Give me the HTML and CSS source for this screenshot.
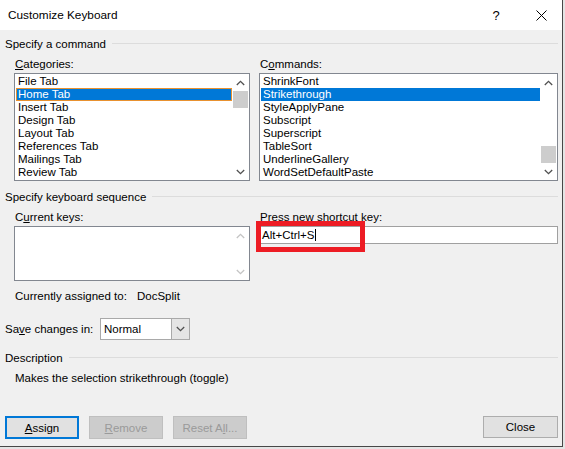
FILE: index.html
```html
<!DOCTYPE html>
<html>
<head>
<meta charset="utf-8">
<title>Customize Keyboard</title>
<link rel="stylesheet" href="styles.css">
</head>
<body>
<div class="dialog">
  <header class="titlebar">
    <span class="title">Customize Keyboard</span>
    <span class="help">?</span>
    <span class="close">
      <svg width="11" height="11" viewBox="0 0 11 11"><path d="M0.5 0.5 L10.5 10.5 M10.5 0.5 L0.5 10.5" stroke="#000" stroke-width="1" fill="none"/></svg>
    </span>
  </header>
  <main class="content">
    <div class="group-head"><span>Specify a command</span></div>
    <div class="cols labels">
      <div class="lbl"><u>C</u>ategories:</div>
      <div class="lbl">C<u>o</u>mmands:</div>
    </div>
    <div class="cols lists">
      <div class="listbox">
        <ul class="items">
          <li>File Tab</li>
          <li class="sel focus">Home Tab</li>
          <li>Insert Tab</li>
          <li>Design Tab</li>
          <li>Layout Tab</li>
          <li>References Tab</li>
          <li>Mailings Tab</li>
          <li>Review Tab</li>
        </ul>
        <div class="vscroll">
          <span class="arrow"><svg width="9" height="6" viewBox="0 0 9 6"><path d="M0.8 5 L4.5 1.3 L8.2 5" class="chev"/></svg></span>
          <span class="track"><span class="thumb"></span></span>
          <span class="arrow"><svg width="9" height="6" viewBox="0 0 9 6"><path d="M0.8 1 L4.5 4.7 L8.2 1" class="chev"/></svg></span>
        </div>
      </div>
      <div class="listbox">
        <ul class="items">
          <li>ShrinkFont</li>
          <li class="sel">Strikethrough</li>
          <li>StyleApplyPane</li>
          <li>Subscript</li>
          <li>Superscript</li>
          <li>TableSort</li>
          <li>UnderlineGallery</li>
          <li>WordSetDefaultPaste</li>
        </ul>
        <div class="vscroll">
          <span class="arrow"><svg width="9" height="6" viewBox="0 0 9 6"><path d="M0.8 5 L4.5 1.3 L8.2 5" class="chev"/></svg></span>
          <span class="track end"><span class="thumb"></span></span>
          <span class="arrow"><svg width="9" height="6" viewBox="0 0 9 6"><path d="M0.8 1 L4.5 4.7 L8.2 1" class="chev"/></svg></span>
        </div>
      </div>
    </div>

    <div class="group-head second"><span>Specify keyboard sequence</span></div>
    <div class="cols labels">
      <div class="lbl">C<u>u</u>rrent keys:</div>
      <div class="lbl">Press new shortcut key:</div>
    </div>
    <div class="cols keys">
      <div class="keysbox">
        <div class="vscroll disabled">
          <span class="arrow"><svg width="9" height="6" viewBox="0 0 9 6"><path d="M0.8 5 L4.5 1.3 L8.2 5" class="chev"/></svg></span>
          <span class="track"></span>
          <span class="arrow"><svg width="9" height="6" viewBox="0 0 9 6"><path d="M0.8 1 L4.5 4.7 L8.2 1" class="chev"/></svg></span>
        </div>
      </div>
      <div class="keyfield">
        <div class="input"><span class="typed">Alt+Ctrl+S</span></div>
        <div class="redmark"></div>
      </div>
    </div>
    <div class="assigned">
      <span class="assigned-lbl">Currently assigned to:</span>
      <span>DocSplit</span>
    </div>
    <div class="saverow">
      <span class="save-lbl">Sa<u>v</u>e changes in:</span>
      <div class="combo">
        <span class="combo-text">Normal</span>
        <span class="combo-btn"><svg width="9" height="6" viewBox="0 0 9 6"><path d="M0.8 1 L4.5 4.7 L8.2 1" class="chev"/></svg></span>
      </div>
    </div>

    <div class="group-head third"><span>Description</span></div>
    <div class="desc">Makes the selection strikethrough (toggle)</div>

    <div class="buttons">
      <button class="btn default"><u>A</u>ssign</button>
      <button class="btn disabled"><u>R</u>emove</button>
      <button class="btn disabled">Reset A<u>l</u>l...</button>
      <button class="btn close-btn">Close</button>
    </div>
  </main>
</div>
</body>
</html>
```

FILE: styles.css
```css
html, body {
  margin: 0;
  padding: 0;
}
body {
  background: #e4e4e4;
  font-family: "Liberation Sans", Arial, sans-serif;
  font-size: 11.5px;
  color: #000;
  width: 565px;
  height: 449px;
  overflow: hidden;
}
.dialog {
  width: 563px;
  height: 447px;
  box-sizing: border-box;
  border-right: 1px solid #474747;
  border-bottom: 1px solid #474747;
  background: #f0f0f0;
  display: flex;
  flex-direction: column;
}
.titlebar {
  height: 30px;
  background: #fff;
  display: flex;
  align-items: center;
  padding-left: 8px;
  flex: none;
}
.title {
  flex: 1;
  font-size: 11.8px;
}
.help {
  width: 42px;
  margin-right: 3px;
  text-align: center;
  font-size: 13px;
}
.close {
  width: 42px;
  display: flex;
  justify-content: center;
  align-items: center;
}
.content {
  padding: 0 4px 0 5px;
  display: flex;
  flex-direction: column;
}
.group-head {
  height: 16px;
  line-height: 16px;
  display: flex;
  align-items: center;
  margin-top: 6px;
  white-space: nowrap;
}
.group-head::after {
  content: "";
  flex: 1;
  border-top: 1px solid #dcdcdc;
  margin-left: 6px;
  margin-top: -1px;
}
.group-head.second { margin-top: 8px; }
.group-head.third { margin-top: 10px; }
.cols {
  display: grid;
  grid-template-columns: 236px 299px;
  column-gap: 9px;
  padding-left: 9px;
}
.labels {
  margin-top: 4px;
  height: 16px;
  line-height: 16px;
}
.lbl { padding-left: 1px; white-space: nowrap; }
.lists { margin-top: 1px; }
.listbox {
  height: 108px;
  box-sizing: border-box;
  border: 1px solid #828790;
  background: #fff;
  display: flex;
}
.items {
  list-style: none;
  margin: 0;
  padding: 1px 0 0 1px;
  flex: 1;
}
.items li {
  height: 13px;
  line-height: 13px;
  padding-left: 2px;
  white-space: nowrap;
  box-sizing: border-box;
}
.items li.sel {
  background: #0078d7;
  color: #fff;
}
.items li.focus {
  outline: 1px solid #e8912f;
  outline-offset: -1px;
}
.vscroll {
  width: 17px;
  display: flex;
  flex-direction: column;
  flex: none;
}
.arrow {
  height: 17px;
  display: flex;
  align-items: center;
  justify-content: center;
  flex: none;
}
.chev {
  fill: none;
  stroke: #505050;
  stroke-width: 1.3;
}
.disabled .chev { stroke: #c4c4c4; }
.track {
  flex: 1;
  display: flex;
  flex-direction: column;
  padding: 0 1px;
}
.track.end { justify-content: flex-end; }
.thumb {
  height: 17px;
  background: #cdcdcd;
}
.keys { margin-top: 1px; align-items: start; }
.keysbox {
  height: 55px;
  box-sizing: border-box;
  border: 1px solid #828790;
  background: #fff;
  display: flex;
  justify-content: flex-end;
}
.keyfield {
  position: relative;
  padding-left: 1px;
}
.input {
  height: 18px;
  box-sizing: border-box;
  border: 1px solid #a0a0a0;
  background: #fff;
  display: flex;
  align-items: center;
  padding-left: 1px;
}
.typed {
  line-height: 12px;
  padding-right: 1px;
  border-right: 1px solid #000;
}
.redmark {
  position: absolute;
  left: -3px;
  top: -5px;
  width: 109px;
  height: 31px;
  box-sizing: border-box;
  border: 5px solid #ed1c24;
}
.assigned {
  margin-top: 7px;
  height: 16px;
  line-height: 16px;
  padding-left: 10px;
  display: flex;
  white-space: nowrap;
}
.assigned-lbl { width: 122px; flex: none; }
.saverow {
  margin-top: 14px;
  height: 22px;
  display: flex;
  align-items: center;
  white-space: nowrap;
}
.save-lbl { width: 95px; flex: none; }
.combo {
  width: 90px;
  height: 22px;
  box-sizing: border-box;
  border: 1px solid #a9a9a9;
  background: #fff;
  display: flex;
}
.combo-text {
  flex: 1;
  line-height: 20px;
  padding-left: 3px;
}
.combo-btn {
  width: 17px;
  background: #e5e5e5;
  border-left: 1px solid #a9a9a9;
  display: flex;
  align-items: center;
  justify-content: center;
}
.desc {
  margin-top: 4px;
  height: 16px;
  line-height: 16px;
  padding-left: 10px;
  white-space: nowrap;
}
.buttons {
  margin-top: 30px;
  display: flex;
  gap: 10px;
}
.btn {
  width: 74px;
  height: 23px;
  box-sizing: border-box;
  font-family: inherit;
  font-size: 11.5px;
  padding: 0;
  background: #e1e1e1;
  border: 1px solid #adadad;
  color: #000;
}
.btn.default {
  border: 2px solid #0078d7;
}
.btn.disabled {
  background: #cccccc;
  border-color: #bfbfbf;
  color: #9a9a9a;
}
.btn.close-btn {
  margin-left: auto;
  width: 75px;
  height: 22px;
}
```
